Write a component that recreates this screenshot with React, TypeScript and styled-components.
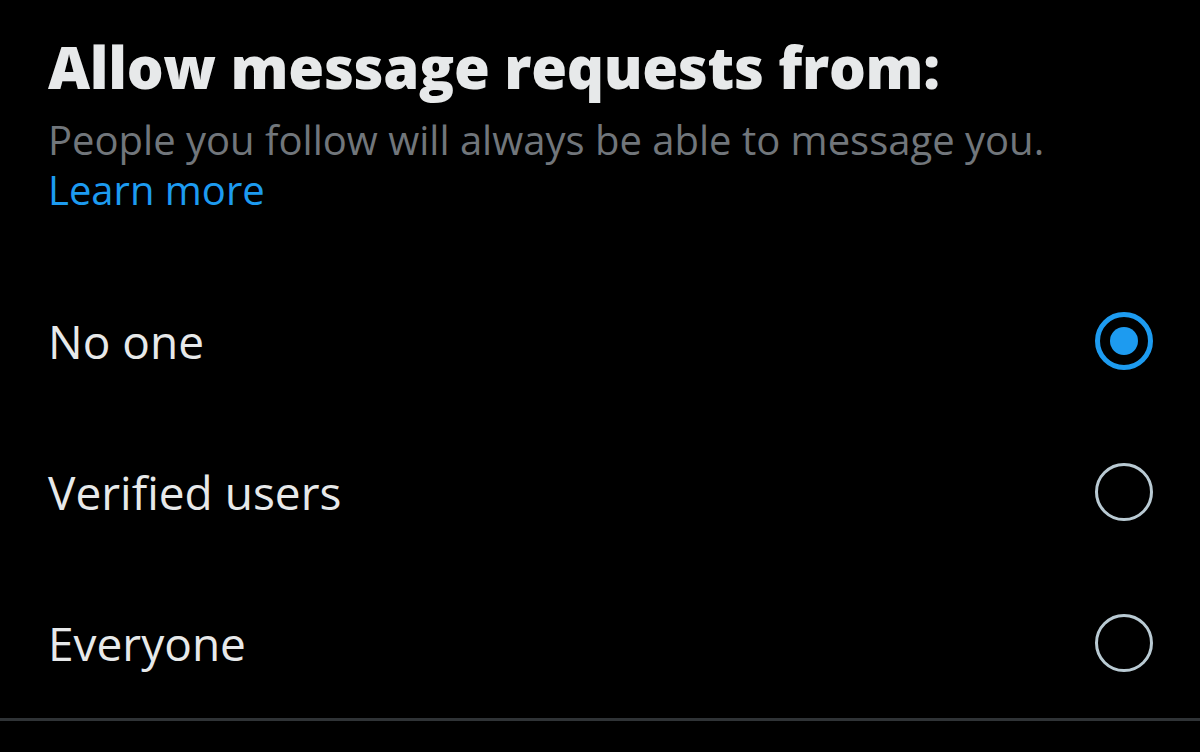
import React, { useState } from "react";
import styled, { createGlobalStyle } from "styled-components";

const Global = createGlobalStyle`
  html, body {
    margin: 0;
    padding: 0;
    background: #000;
  }
  body {
    font-family: "Open Sans", "Noto Sans", sans-serif;
    color: #e7e9ea;
  }
`;

const Page = styled.div`
  width: 1200px;
  height: 752px;
  background: #000;
  display: flex;
  flex-direction: column;
  overflow: hidden;
`;

const Header = styled.div`
  padding: 28px 48px 0 48px;
`;

const Title = styled.h1`
  margin: 0;
  font-size: 58px;
  line-height: 78px;
  font-weight: 800;
  color: #e7e9ea;
  letter-spacing: -0.3px;
`;

const Description = styled.p`
  margin: 9px 0 0 0;
  font-size: 40px;
  line-height: 50px;
  font-weight: 400;
  color: #71767b;
`;

const Link = styled.a`
  color: #1d9bf0;
  text-decoration: none;
  cursor: pointer;
`;

const Options = styled.div`
  margin-top: 50px;
  display: flex;
  flex-direction: column;
`;

const Row = styled.label`
  height: 151px;
  padding: 0 47px 0 48px;
  display: flex;
  align-items: center;
  justify-content: space-between;
  cursor: pointer;
`;

const RowLabel = styled.span`
  font-size: 46px;
  font-weight: 500;
  color: #e7e9ea;
`;

const Radio = styled.span<{ $checked: boolean }>`
  width: 58px;
  height: 58px;
  box-sizing: border-box;
  border-radius: 50%;
  border: ${(p) => (p.$checked ? "5px solid #1d9bf0" : "3px solid #b9cad3")};
  display: flex;
  align-items: center;
  justify-content: center;

  &::after {
    content: "";
    display: ${(p) => (p.$checked ? "block" : "none")};
    width: 28px;
    height: 28px;
    border-radius: 50%;
    background: #1d9bf0;
  }
`;

const Divider = styled.div`
  height: 3px;
  background: #2f3336;
`;

const options = ["No one", "Verified users", "Everyone"];

export default function App() {
  const [selected, setSelected] = useState("No one");
  return (
    <Page>
      <Global />
      <Header>
        <Title>Allow message requests from:</Title>
        <Description>
          People you follow will always be able to message you.
          <br />
          <Link>Learn more</Link>
        </Description>
      </Header>
      <Options>
        {options.map((o) => (
          <Row key={o} onClick={() => setSelected(o)}>
            <RowLabel>{o}</RowLabel>
            <Radio $checked={selected === o} />
          </Row>
        ))}
      </Options>
      <Divider />
    </Page>
  );
}
